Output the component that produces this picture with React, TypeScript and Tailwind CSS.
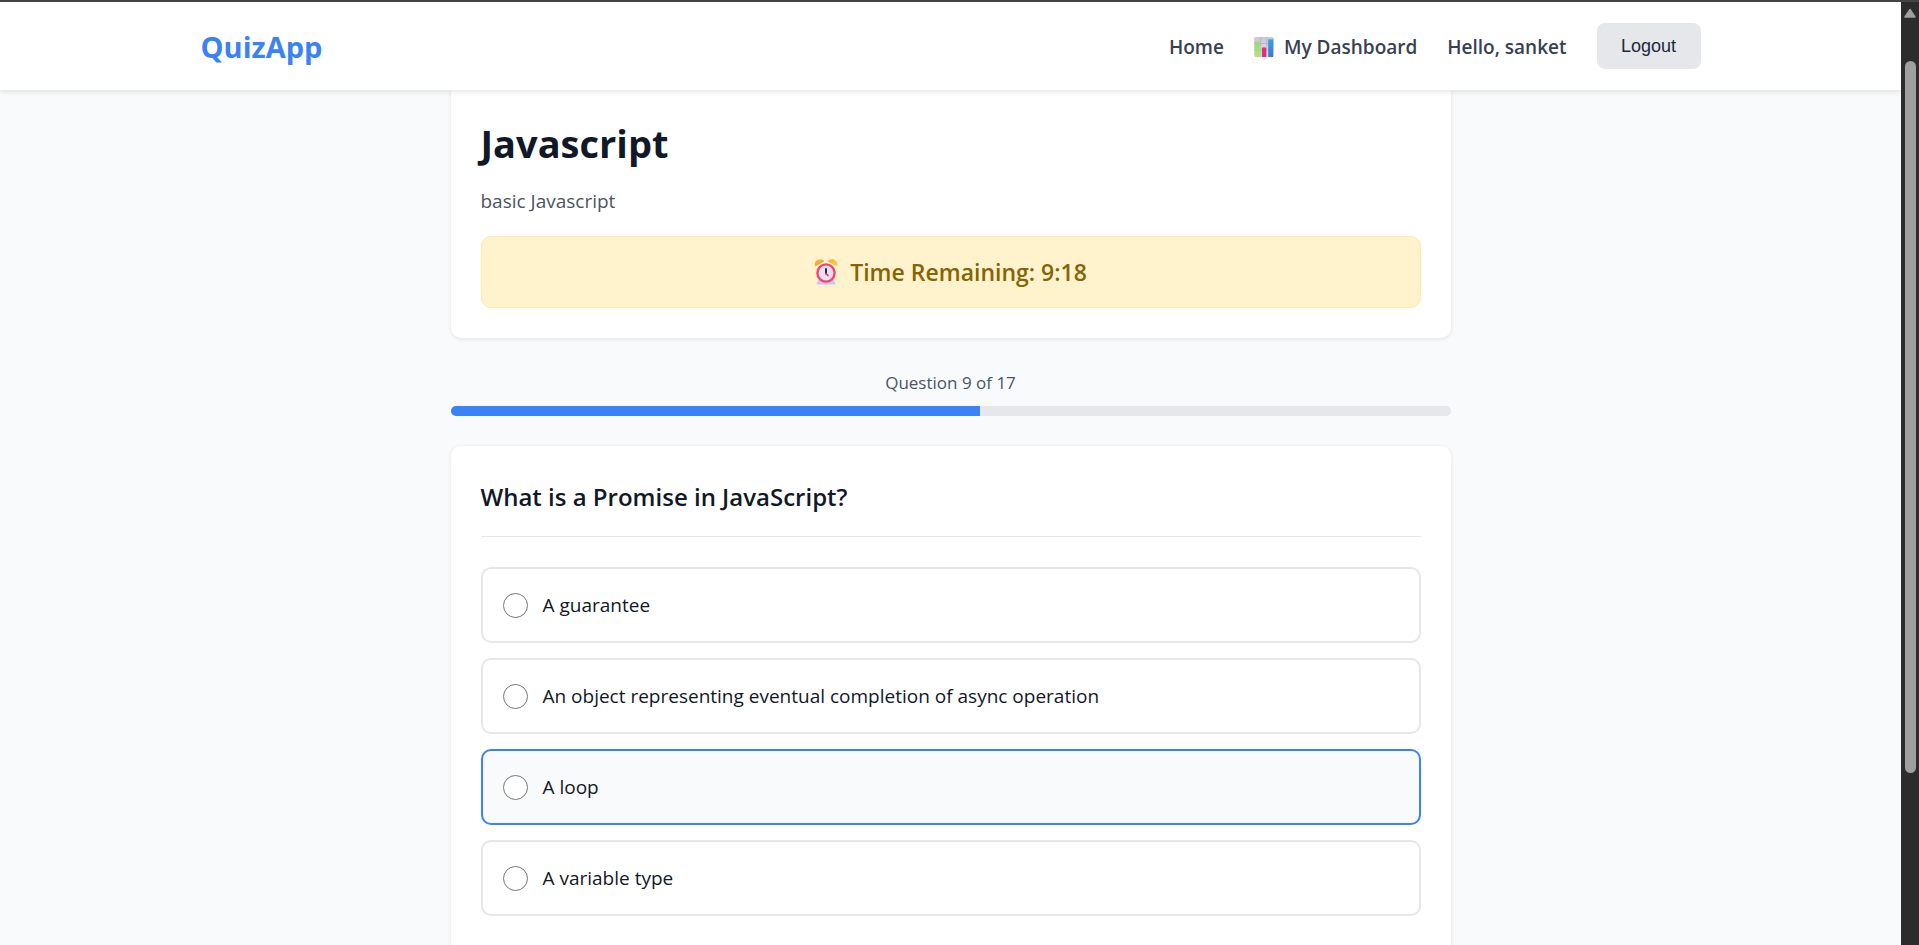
import { useState } from "react";

const OPTIONS = [
  "A guarantee",
  "An object representing eventual completion of async operation",
  "A loop",
  "A variable type",
];

const CURRENT = 9;
const TOTAL = 17;
const HIGHLIGHTED = 2;

function ChartIcon() {
  return (
    <svg viewBox="0 0 20 20" className="size-5 shrink-0" aria-hidden="true">
      <defs>
        <linearGradient id="chart-bg" x1="0" y1="0" x2="0" y2="1">
          <stop offset="0" stopColor="#cdc6d6" />
          <stop offset="1" stopColor="#e4dcea" />
        </linearGradient>
        <linearGradient id="chart-green" x1="0" y1="0" x2="0" y2="1">
          <stop offset="0" stopColor="#8fe06a" />
          <stop offset="1" stopColor="#b7e36a" />
        </linearGradient>
        <linearGradient id="chart-blue" x1="0" y1="0" x2="0" y2="1">
          <stop offset="0" stopColor="#2fa4ee" />
          <stop offset="1" stopColor="#3f77cc" />
        </linearGradient>
      </defs>
      <rect width="20" height="20" rx="2" fill="url(#chart-bg)" />
      <path d="M6.7 0v20M12.7 0v20M0 6.5h20M0 13h20" stroke="#b5adc0" strokeWidth="0.7" />
      <rect x="1" y="4.6" width="4.8" height="15.4" rx="0.6" fill="url(#chart-green)" />
      <rect x="8" y="10.4" width="4.2" height="9.6" rx="0.6" fill="#e22f72" />
      <rect x="14.2" y="2.2" width="5" height="17.8" rx="0.6" fill="url(#chart-blue)" />
    </svg>
  );
}

function AlarmIcon() {
  return (
    <svg viewBox="0 0 24 26" className="h-[26px] w-6 shrink-0" aria-hidden="true">
      <defs>
        <linearGradient id="bell-left" x1="0" y1="0" x2="1" y2="1">
          <stop offset="0" stopColor="#fbbd4a" />
          <stop offset="1" stopColor="#e9963c" />
        </linearGradient>
        <linearGradient id="bell-right" x1="0" y1="0" x2="1" y2="1">
          <stop offset="0" stopColor="#f8a63a" />
          <stop offset="1" stopColor="#fbd84c" />
        </linearGradient>
      </defs>
      <path d="M4.6 20.6h14.8l2 4.2c.2.5 0 .8-.6.8H3.2c-.6 0-.8-.3-.6-.8z" fill="#d3c2ee" />
      <path d="M1.2 7.6C-.6 3.6 2.4.3 6 .3c2 0 3.4.8 4.2 2.2z" fill="url(#bell-left)" />
      <path d="M22.8 7.6C24.6 3.6 21.6.3 18 .3c-2 0-3.4.8-4.2 2.2z" fill="url(#bell-right)" />
      <circle cx="12" cy="14" r="8.6" fill="#e9dff2" stroke="#f5456c" strokeWidth="2.4" />
      <path d="M12 10v4.4" stroke="#2f2440" strokeWidth="2" strokeLinecap="round" />
      <path d="M12 14.4l2 2.2" stroke="#e0355f" strokeWidth="1.5" strokeLinecap="round" />
    </svg>
  );
}

function Header() {
  return (
    <header className="relative z-10 bg-white shadow-[0_2px_5px_rgba(0,0,0,0.1)]">
      <div className="mx-auto flex h-[88px] max-w-[1500px] items-center justify-between">
        <a href="#" className="pt-0.5 text-[29px] font-bold text-[#3b82f6]">
          QuizApp
        </a>
        <nav className="flex items-center gap-[30px] text-[19px] font-semibold text-[#374151]">
          <a href="#home" className="pt-0.5">
            Home
          </a>
          <a href="#dashboard" className="flex items-center gap-[10px] pt-0.5">
            <ChartIcon />
            My Dashboard
          </a>
          <span className="pt-0.5">Hello, sanket</span>
          <button
            type="button"
            className="h-[46px] w-[104px] rounded-lg bg-[#e5e7eb] font-['Liberation_Sans',sans-serif] text-lg font-normal text-[#1f2937]"
          >
            Logout
          </button>
        </nav>
      </div>
    </header>
  );
}

function QuizIntro() {
  return (
    <section className="rounded-b-[10px] bg-white px-[30px] pt-[29px] pb-[30px] shadow-[0_1px_4px_rgba(0,0,0,0.1)]">
      <h1 className="text-[38px] leading-[48px] font-bold text-[#111827]">Javascript</h1>
      <p className="mt-[19px] text-[19px] leading-[30px] text-[#4b5563]">basic Javascript</p>
      <div className="mt-5 flex h-[72px] items-center justify-center gap-3 rounded-[10px] border border-[#ffeaa7] bg-[#fff3cd] text-[23px] font-semibold text-[#856404]">
        <AlarmIcon />
        Time Remaining: 9:18
      </div>
    </section>
  );
}

function Progress() {
  return (
    <div className="mt-[31px]">
      <p className="text-center text-[17px] leading-7 text-[#4b5563]">
        Question {CURRENT} of {TOTAL}
      </p>
      <div className="mt-[9px] h-[10px] overflow-hidden rounded-[5px] bg-[#e5e7eb]">
        <div className="h-full bg-[#3b82f6]" style={{ width: `${(CURRENT / TOTAL) * 100}%` }} />
      </div>
    </div>
  );
}

function Question() {
  const [selected, setSelected] = useState<number | null>(null);
  return (
    <section className="mt-[30px] rounded-[10px] bg-white px-[30px] pt-[31px] pb-[60px] shadow-[0_1px_4px_rgba(0,0,0,0.1)]">
      <h2 className="mb-[30px] border-b border-[#e5e7eb] pb-[19px] text-[24px] leading-10 font-semibold text-[#111827]">
        What is a Promise in JavaScript?
      </h2>
      <div className="flex flex-col gap-[15px]">
        {OPTIONS.map((option, i) => (
          <label
            key={option}
            className={`flex h-[76px] items-center gap-[15px] rounded-[10px] border-2 px-5 text-[19px] text-[#111827] ${
              i === HIGHLIGHTED ? "border-[#3b82f6] bg-[#f9fafb]" : "border-[#e5e7eb] bg-white"
            }`}
          >
            <input
              type="radio"
              name="answer"
              checked={selected === i}
              onChange={() => setSelected(i)}
              className="size-[25px] shrink-0 appearance-none rounded-full border border-[#767676] bg-white checked:border-[7px] checked:border-[#3b82f6]"
            />
            {option}
          </label>
        ))}
      </div>
    </section>
  );
}

function Scrollbar() {
  return (
    <div className="flex w-[18px] shrink-0 flex-col items-center bg-[#2c2c2c] pt-1.5" aria-hidden="true">
      <svg viewBox="0 0 12 10" className="h-[10px] w-3 shrink-0">
        <path d="M6 1.5L11 9H1z" fill="#9f9f9f" stroke="#9f9f9f" strokeWidth="1.5" strokeLinejoin="round" />
      </svg>
      <div className="mt-[43px] h-[76%] w-[11px] rounded-full bg-[#9f9f9f]" />
    </div>
  );
}

export default function App() {
  return (
    <div className="flex h-screen flex-col border-t-2 border-[#444444] bg-[#f9fafb] font-['Open_Sans','Noto_Sans',sans-serif]">
      <div className="flex min-h-0 flex-1">
        <div className="min-w-0 flex-1 overflow-hidden">
          <Header />
          <main className="mx-auto max-w-[1000px]">
            <QuizIntro />
            <Progress />
            <Question />
          </main>
        </div>
        <Scrollbar />
      </div>
    </div>
  );
}
